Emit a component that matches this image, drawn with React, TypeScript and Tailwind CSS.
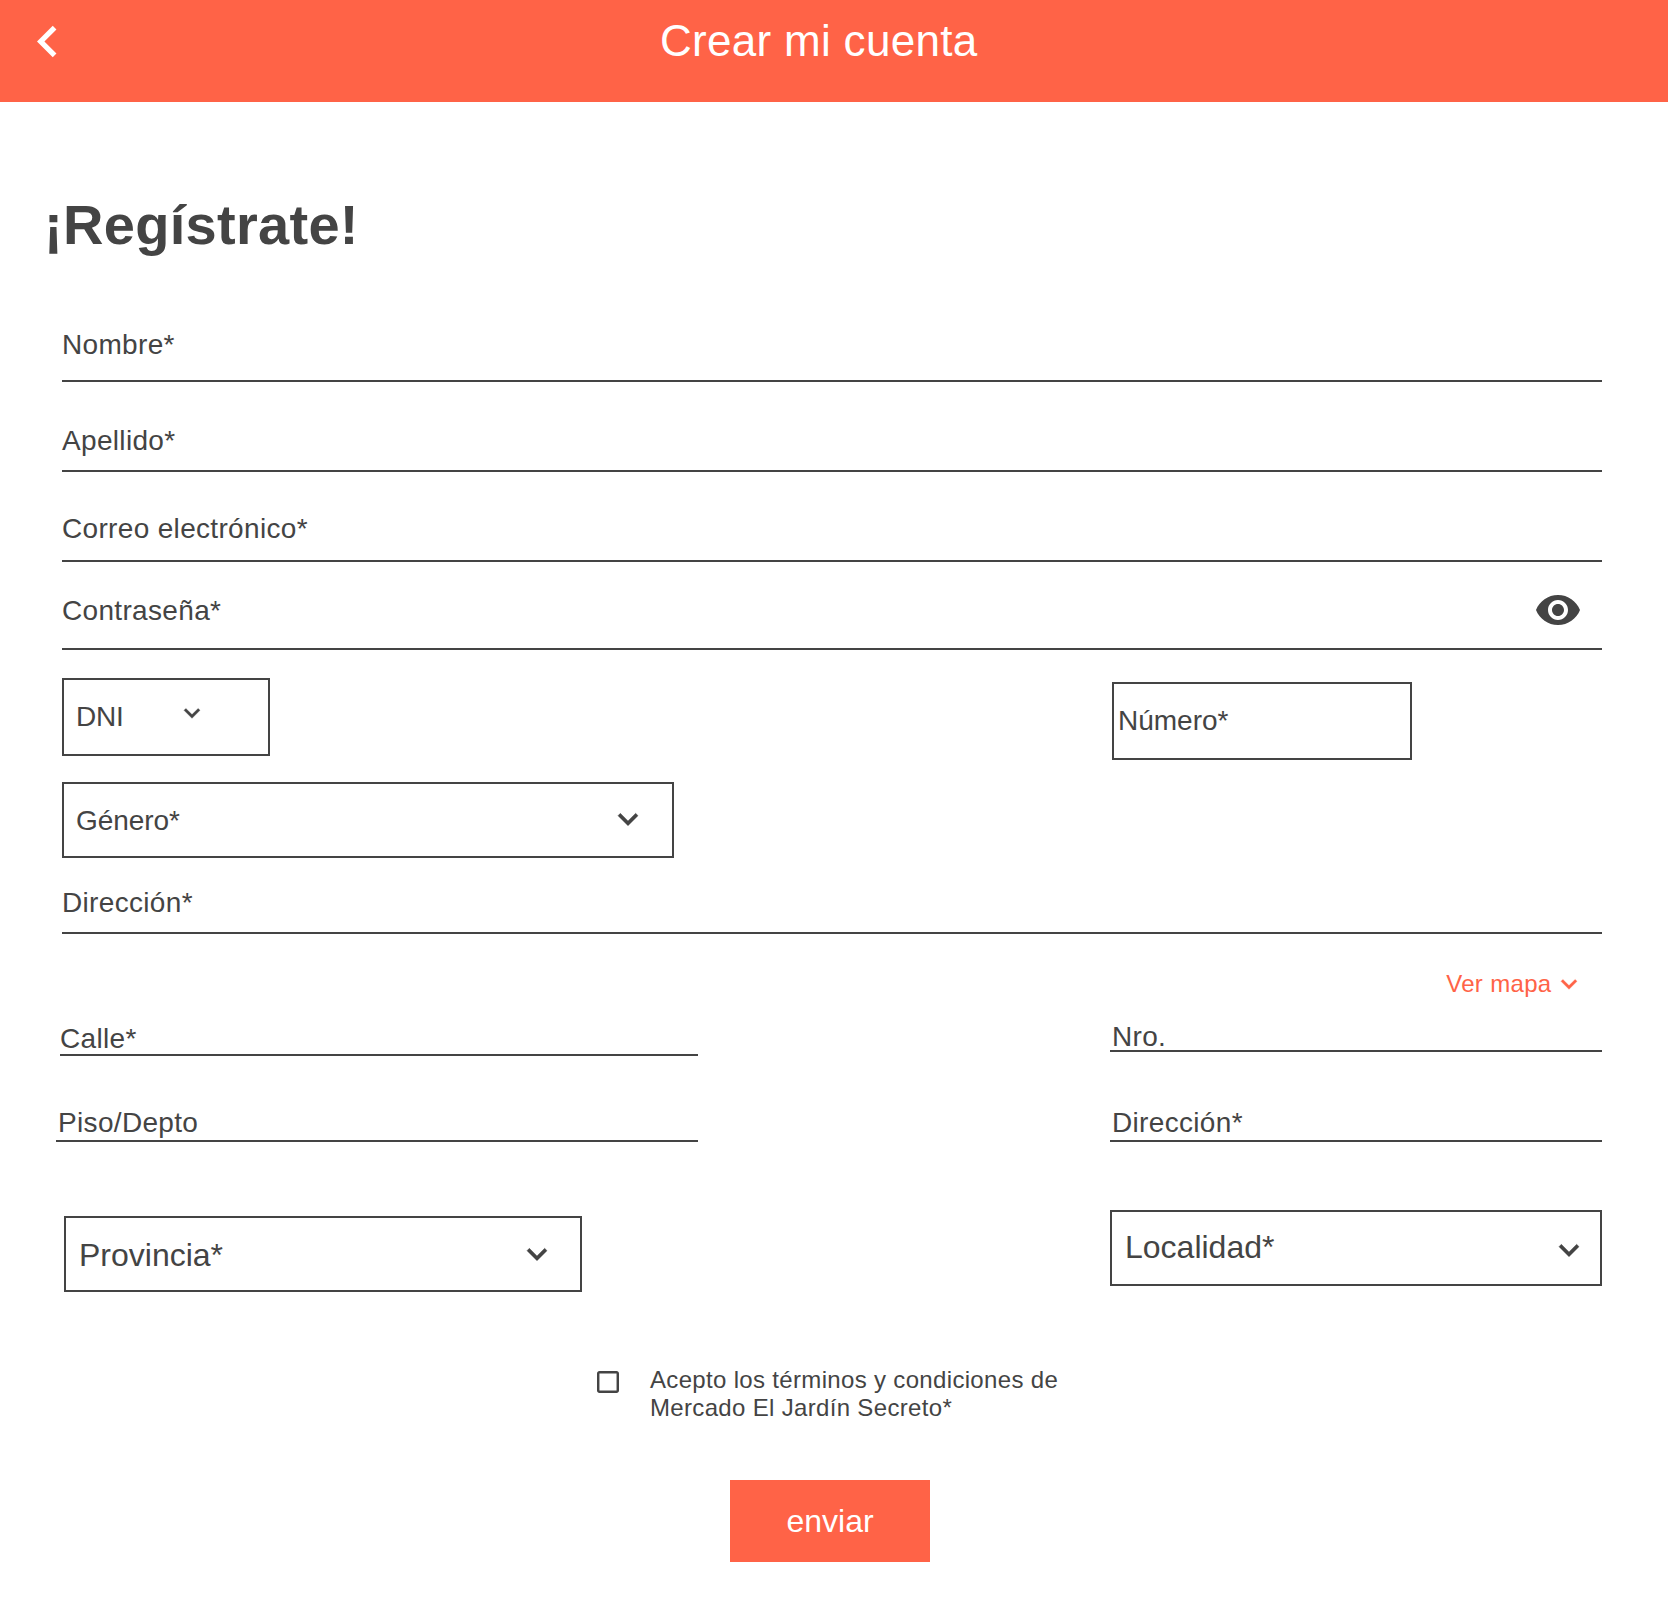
import type { ReactNode } from 'react';

function ChevronDown({ className }: { className: string }) {
  return (
    <svg
      viewBox="0 0 24 24"
      fill="currentColor"
      stroke="currentColor"
      strokeWidth="0.25"
      strokeLinejoin="round"
      className={`shrink-0 ${className}`}
      aria-hidden="true"
    >
      <path d="M16.59 8.59L12 13.17 7.41 8.59 6 10l6 6 6-6z" />
    </svg>
  );
}

function ChevronLeft() {
  return (
    <svg viewBox="0 0 24 24" fill="currentColor" className="size-[63px]" aria-hidden="true">
      <path d="M15.41 7.41L14 6l-6 6 6 6 1.41-1.41L10.83 12z" />
    </svg>
  );
}

function Eye() {
  return (
    <svg viewBox="0 0 24 24" fill="currentColor" className="size-12 shrink-0" aria-hidden="true">
      <path d="M12 4.5C7 4.5 2.73 7.61 1 12c1.73 4.39 6 7.5 11 7.5s9.27-3.11 11-7.5c-1.73-4.39-6-7.5-11-7.5zM12 17c-2.76 0-5-2.24-5-5s2.24-5 5-5 5 2.24 5 5-2.24 5-5 5zm0-8c-1.66 0-3 1.34-3 3s1.34 3 3 3 3-1.34 3-3-1.34-3-3-3z" />
    </svg>
  );
}

/* Text field drawn as a label over a 2px rule */
function LineField({ label, className, children }: { label: string; className: string; children?: ReactNode }) {
  return (
    <div className={`flex items-center justify-between border-b-2 border-[#444444] ${className}`}>
      <span className="translate-y-px text-[28px] leading-7 tracking-[0.33px]">{label}</span>
      {children}
    </div>
  );
}

/* Outlined field, used for selects and the document number */
function BoxField({ className, children }: { className: string; children: ReactNode }) {
  return <div className={`flex items-center border-2 border-[#444444] ${className}`}>{children}</div>;
}

export default function App() {
  return (
    <div className="min-h-[1624px] w-[1668px] bg-white font-['Liberation_Sans',Arial,sans-serif] text-[#444444]">
      <header className="flex h-[102px] items-start bg-[#ff6347] text-white">
        <button className="mt-2.5 ml-4" aria-label="Volver">
          <ChevronLeft />
        </button>
        <h2 className="mt-[17px] ml-[581px] text-[44px] leading-[48px] tracking-[0.3px]">Crear mi cuenta</h2>
      </header>

      <main className="flex flex-col pr-[66px] pl-14">
        <h1 className="mt-[91px] -ml-3 text-[56px] leading-[64px] font-bold tracking-[0.3px]">¡Regístrate!</h1>

        <LineField label="Nombre*" className="mt-[73px] ml-1.5 pb-[22px]" />
        <LineField label="Apellido*" className="mt-11 ml-1.5 pb-4" />
        <LineField label="Correo electrónico*" className="mt-[42px] ml-1.5 pb-[18px]" />
        <LineField label="Contraseña*" className="mt-6 ml-1.5 pr-5 pb-3.5">
          <Eye />
        </LineField>

        <div className="mt-7 grid grid-cols-[1054px_492px] items-start">
          <BoxField className="ml-1.5 h-[78px] w-[208px] pb-0.5 pl-3">
            <span className="w-[100px] translate-y-px text-[28px] leading-7 tracking-[-0.2px]">DNI</span>
            <ChevronDown className="-mt-1.5 size-8" />
          </BoxField>
          <BoxField className="mt-1 ml-0.5 h-[78px] w-[300px] pb-0.5 pl-1">
            <span className="translate-y-px text-[28px] leading-7">Número*</span>
          </BoxField>
        </div>

        <BoxField className="mt-[22px] ml-1.5 h-[76px] w-[612px] justify-between pr-6 pl-3">
          <span className="translate-y-px text-[28px] leading-7 tracking-[-0.05px]">Género*</span>
          <ChevronDown className="-mt-0.5 size-10" />
        </BoxField>

        <LineField label="Dirección*" className="mt-[30px] ml-1.5 pb-4" />

        <button className="mt-[34px] mr-[17px] flex h-8 items-center self-end text-[#ff6347]">
          <span className="text-2xl leading-7 tracking-[0.33px]">Ver mapa</span>
          <ChevronDown className="ml-[1.5px] size-8" />
        </button>

        <div className="grid grid-cols-[1054px_492px] items-start">
          <LineField label="Calle*" className="mt-6 ml-1 w-[638px] pb-0.5" />
          <LineField label="Nro." className="mt-[22px] pl-0.5" />
        </div>

        <div className="mt-[52px] grid grid-cols-[1054px_492px] items-start">
          <LineField label="Piso/Depto" className="w-[642px] pb-1 pl-0.5" />
          <LineField label="Dirección*" className="pb-1 pl-0.5" />
        </div>

        <div className="mt-[68px] grid grid-cols-[1054px_492px] items-start">
          <BoxField className="mt-1.5 ml-2 h-[76px] w-[518px] justify-between pr-[23px] pl-[13px]">
            <span className="mt-0.5 text-[32px] leading-8">Provincia*</span>
            <ChevronDown className="-mt-px size-10" />
          </BoxField>
          <BoxField className="h-[76px] justify-between pr-[11px] pl-[13px]">
            <span className="-mt-0.5 text-[32px] leading-8">Localidad*</span>
            <ChevronDown className="mt-[3px] size-10" />
          </BoxField>
        </div>

        <div className="mt-[74px] ml-[541px] flex items-start">
          <svg viewBox="3 3 18 18" fill="currentColor" className="mt-[5px] size-[22px] shrink-0" aria-hidden="true">
            <path d="M19 5v14H5V5h14m0-2H5c-1.1 0-2 .9-2 2v14c0 1.1.9 2 2 2h14c1.1 0 2-.9 2-2V5c0-1.1-.9-2-2-2z" />
          </svg>
          <p className="ml-[31px] text-2xl leading-7 tracking-[0.33px]">
            Acepto los términos y condiciones de
            <br />
            Mercado El Jardín Secreto*
          </p>
        </div>

        <button className="mt-[58px] ml-[674px] h-[82px] w-[200px] bg-[#ff6347] text-[32px] leading-8 text-white">
          enviar
        </button>
      </main>
    </div>
  );
}
